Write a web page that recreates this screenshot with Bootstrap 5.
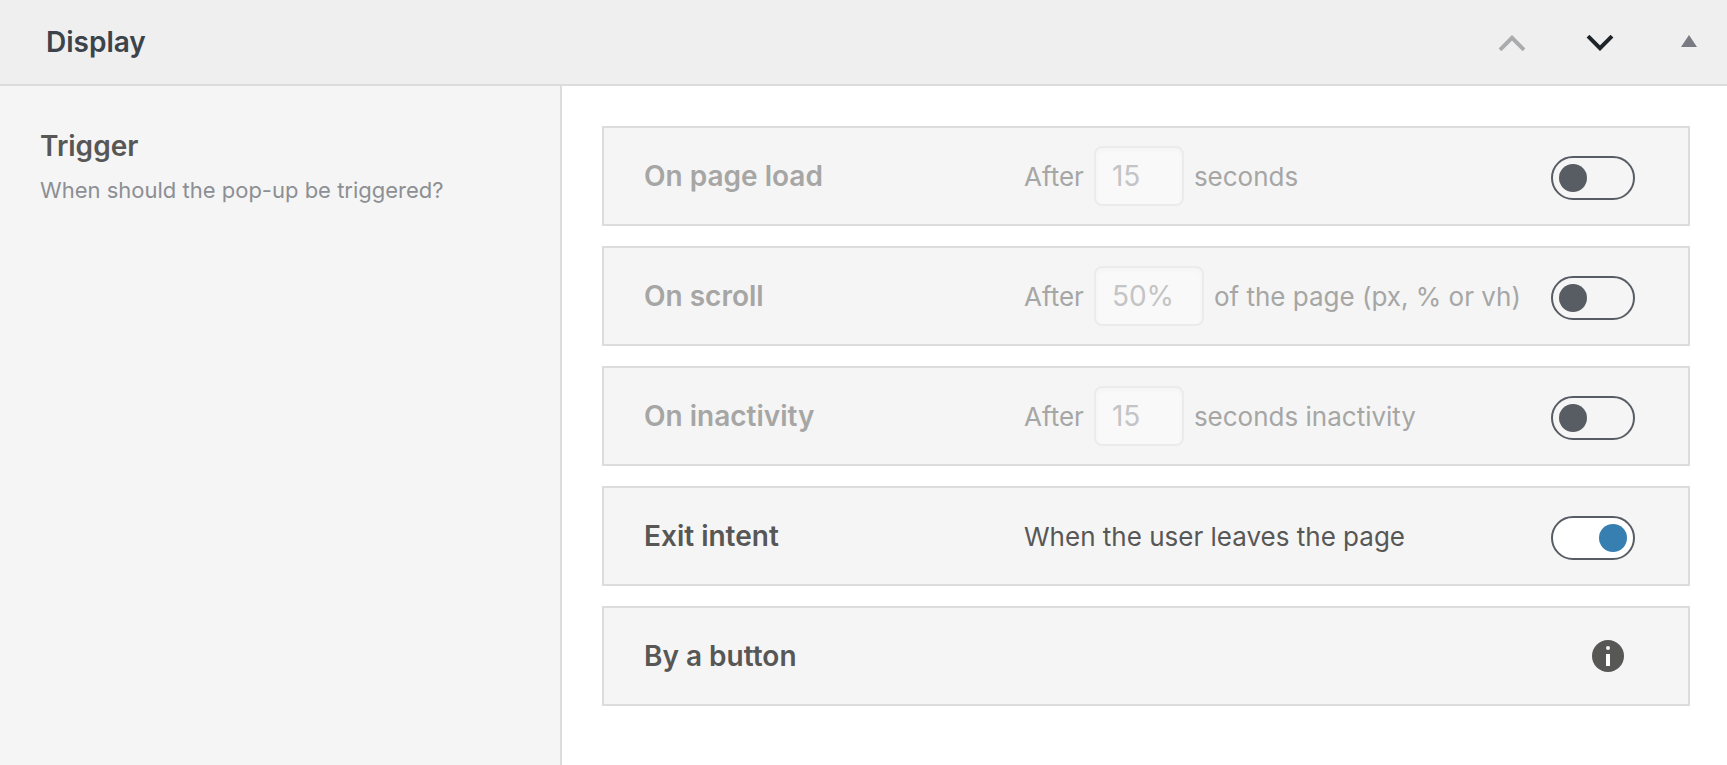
<!DOCTYPE html>
<html lang="en">
<head>
<meta charset="utf-8">
<meta name="viewport" content="width=device-width, initial-scale=1">
<title>Display</title>
<link rel="stylesheet" href="https://cdn.jsdelivr.net/npm/bootstrap@5.3.0/dist/css/bootstrap.min.css">
<style>
  body { font-family: Inter, "Liberation Sans", sans-serif; color: #575756; font-size: 26px; line-height: 32px; background: #fff; }
  .panel-head { background: #efefef; border-bottom: 2px solid #dcdcdc; padding: 0 14px 0 46px; height: 86px; }
  .panel-head h2 { font-size: 28px; line-height: 36px; font-weight: 600; color: #3c434a; }
  .head-btn { width: 48px; height: 48px; padding: 2px 0 0; background: none; }
  .order-btns { gap: 40px; }
  .toggle-panel { margin-left: 41px; }
  .side { flex: 0 0 562px; background: #f5f5f5; border-right: 2px solid #dcdcdc; padding: 42px 40px; }
  .side h3, .trigger-name { font-size: 28px; line-height: 36px; font-weight: 600; color: inherit; }
  .side p { font-size: 22px; line-height: 28px; color: #8c8f94; margin-top: 12px; }
  .content { padding: 40px 37px 40px 40px; gap: 20px; }
  .trigger { min-height: 100px; background: #f5f5f5; border: 2px solid #dcdcdc; padding: 0 53px 0 40px; }
  .trigger-name { flex: 0 0 380px; }
  .trigger-off label { color: #a6a6a5; }
  .trigger-text { gap: 10px; }
  .trigger-text label, .trigger-text span { padding-top: 2px; }
  .value-box { width: 90px; height: 60px; padding: 0 16px; border: 2px solid #ebebeb; border-radius: 8px; background: #f9f9f9; box-shadow: inset 0 2px 4px #f3f3f3; color: #c3c4c5; font-size: 28px; }
  .value-wide { width: 110px; }
  .switch-box { appearance: none; width: 84px; height: 44px; margin: 4px 0 0; padding: 6px; border: 2px solid #585c63; border-radius: 22px; display: flex; }
  .switch-box::before { content: ""; width: 28px; height: 28px; border-radius: 50%; background: #585c63; }
  .switch-box:checked { background: #fff; justify-content: flex-end; }
  .switch-box:checked::before { background: #377fb1; }
  .info-btn { margin-right: 11px; }
</style>
</head>
<body>
<div class="d-flex flex-column min-vh-100">
  <header class="panel-head d-flex align-items-center">
    <h2 class="m-0 me-auto">Display</h2>
    <div class="order-btns d-flex">
      <button type="button" class="head-btn border-0 d-flex align-items-center justify-content-center" aria-label="Move up">
        <svg width="28" height="16" viewBox="0 0 28 16"><path d="M2 14.800 14 2.800l12 12" fill="none" stroke="#a9abad" stroke-width="4"/></svg>
      </button>
      <button type="button" class="head-btn border-0 d-flex align-items-center justify-content-center" aria-label="Move down">
        <svg width="28" height="16" viewBox="0 0 28 16"><path d="M2 1.200 14 13.200l12-12" fill="none" stroke="#1d2327" stroke-width="4"/></svg>
      </button>
    </div>
    <button type="button" class="toggle-panel head-btn border-0 d-flex align-items-center justify-content-center" aria-label="Toggle panel">
      <svg width="16" height="16" viewBox="0 0 16 16"><path d="M8 0l8 12H0z" fill="#787c82"/></svg>
    </button>
  </header>
  <div class="d-flex flex-grow-1">
    <aside class="side">
      <h3 class="m-0">Trigger</h3>
      <p class="mb-0">When should the pop-up be triggered?</p>
    </aside>
    <main class="content d-flex flex-column flex-grow-1">
      <div class="trigger trigger-off d-flex align-items-center">
        <label class="trigger-name" for="on-load">On page load</label>
        <div class="trigger-text d-flex align-items-center me-auto">
          <label for="load-value">After</label>
          <input class="value-box" id="load-value" type="text" value="15" disabled>
          <label for="load-value">seconds</label>
        </div>
        <input class="switch-box" id="on-load" type="checkbox" role="switch">
      </div>
      <div class="trigger trigger-off d-flex align-items-center">
        <label class="trigger-name" for="on-scroll">On scroll</label>
        <div class="trigger-text d-flex align-items-center me-auto">
          <label for="scroll-value">After</label>
          <input class="value-box value-wide" id="scroll-value" type="text" value="50%" disabled>
          <label for="scroll-value">of the page (px, % or vh)</label>
        </div>
        <input class="switch-box" id="on-scroll" type="checkbox" role="switch">
      </div>
      <div class="trigger trigger-off d-flex align-items-center">
        <label class="trigger-name" for="on-idle">On inactivity</label>
        <div class="trigger-text d-flex align-items-center me-auto">
          <label for="idle-value">After</label>
          <input class="value-box" id="idle-value" type="text" value="15" disabled>
          <label for="idle-value">seconds inactivity</label>
        </div>
        <input class="switch-box" id="on-idle" type="checkbox" role="switch">
      </div>
      <div class="trigger d-flex align-items-center">
        <label class="trigger-name" for="on-exit">Exit intent</label>
        <div class="trigger-text d-flex align-items-center me-auto">
          <span>When the user leaves the page</span>
        </div>
        <input class="switch-box" id="on-exit" type="checkbox" role="switch" checked>
      </div>
      <div class="trigger d-flex align-items-center">
        <span class="trigger-name me-auto">By a button</span>
        <button type="button" class="info-btn border-0 p-0 bg-transparent d-flex" aria-label="More information">
          <svg width="32" height="32" viewBox="0 0 32 32"><circle cx="16" cy="16" r="16" fill="#575756"/><circle cx="16" cy="8" r="2" fill="#f5f5f5"/><path d="M14 14h4v12h-4z" fill="#fff"/></svg>
        </button>
      </div>
    </main>
  </div>
</div>
<script src="https://cdn.jsdelivr.net/npm/bootstrap@5.3.0/dist/js/bootstrap.bundle.min.js"></script>
</body>
</html>
